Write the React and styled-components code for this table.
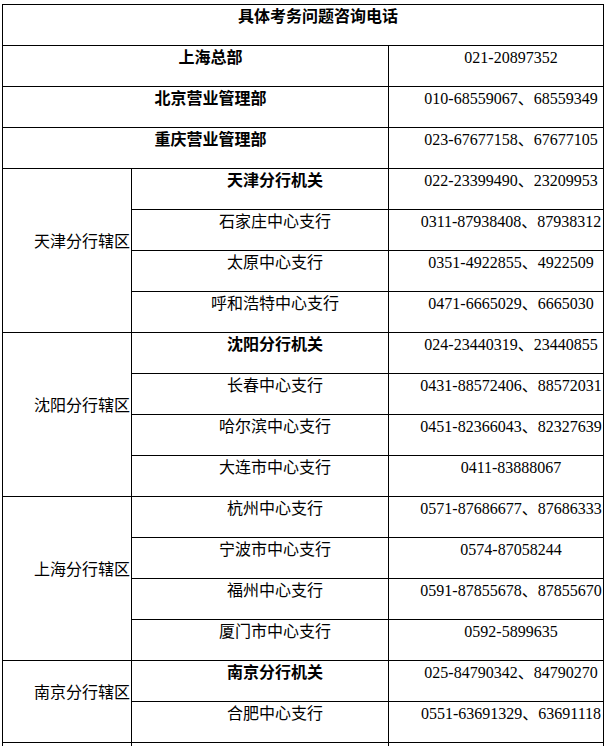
import React from 'react'
import styled, { createGlobalStyle } from 'styled-components'

const GlobalStyle = createGlobalStyle`
  body {
    margin: 0;
    background: #ffffff;
    font-family: 'Liberation Serif', 'Noto Sans CJK SC', serif;
    color: #000000;
  }`

const Page = styled.div`
  padding: 4px 0 0 2px;`

const Sheet = styled.div`
  display: grid;
  grid-template-columns: 128px 256px 214px;
  grid-auto-rows: 40px;
  gap: 1px;
  padding: 1px;
  width: 600px;
  background: #000000;`

const Cell = styled.div`
  background: #ffffff;
  grid-column: ${p => p.$span ? `span ${p.$span}` : 'auto'};
  grid-row: ${p => p.$rows ? `span ${p.$rows}` : 'auto'};
  padding: 2px 0 0 30px;
  font-size: 16px;
  line-height: 20px;
  text-align: center;
  white-space: nowrap;
  overflow: hidden;
  font-weight: ${p => p.$bold ? 'bold' : 'normal'};`

const RegionCell = styled(Cell)`
  display: flex;
  align-items: center;
  justify-content: center;
  padding: 0 0 18px 30px;
  overflow: visible;`

const headOffices = [
  { name: '上海总部', phone: '021-20897352' },
  { name: '北京营业管理部', phone: '010-68559067、68559349' },
  { name: '重庆营业管理部', phone: '023-67677158、67677105' },
]

const regions = [
  {
    name: '天津分行辖区',
    branches: [
      { name: '天津分行机关', phone: '022-23399490、23209953', bold: true },
      { name: '石家庄中心支行', phone: '0311-87938408、87938312' },
      { name: '太原中心支行', phone: '0351-4922855、4922509' },
      { name: '呼和浩特中心支行', phone: '0471-6665029、6665030' },
    ],
  },
  {
    name: '沈阳分行辖区',
    branches: [
      { name: '沈阳分行机关', phone: '024-23440319、23440855', bold: true },
      { name: '长春中心支行', phone: '0431-88572406、88572031' },
      { name: '哈尔滨中心支行', phone: '0451-82366043、82327639' },
      { name: '大连市中心支行', phone: '0411-83888067' },
    ],
  },
  {
    name: '上海分行辖区',
    branches: [
      { name: '杭州中心支行', phone: '0571-87686677、87686333' },
      { name: '宁波市中心支行', phone: '0574-87058244' },
      { name: '福州中心支行', phone: '0591-87855678、87855670' },
      { name: '厦门市中心支行', phone: '0592-5899635' },
    ],
  },
  {
    name: '南京分行辖区',
    branches: [
      { name: '南京分行机关', phone: '025-84790342、84790270', bold: true },
      { name: '合肥中心支行', phone: '0551-63691329、63691118' },
    ],
  },
  {
    name: '',
    branches: [{ name: '', phone: '' }],
  },
]

export default function App() {
  return (
    <Page>
      <GlobalStyle />
      <Sheet>
        <Cell $span={3} $bold>具体考务问题咨询电话</Cell>

        {headOffices.map(o => (
          <React.Fragment key={o.name}>
            <Cell $span={2} $bold>{o.name}</Cell>
            <Cell>{o.phone}</Cell>
          </React.Fragment>
        ))}

        {regions.map((r, ri) => r.branches.map((b, bi) => (
          <React.Fragment key={`${ri}-${bi}`}>
            {bi === 0 && <RegionCell $rows={r.branches.length}>{r.name}</RegionCell>}
            <Cell $bold={b.bold}>{b.name}</Cell>
            <Cell>{b.phone}</Cell>
          </React.Fragment>
        )))}
      </Sheet>
    </Page>
  )
}
